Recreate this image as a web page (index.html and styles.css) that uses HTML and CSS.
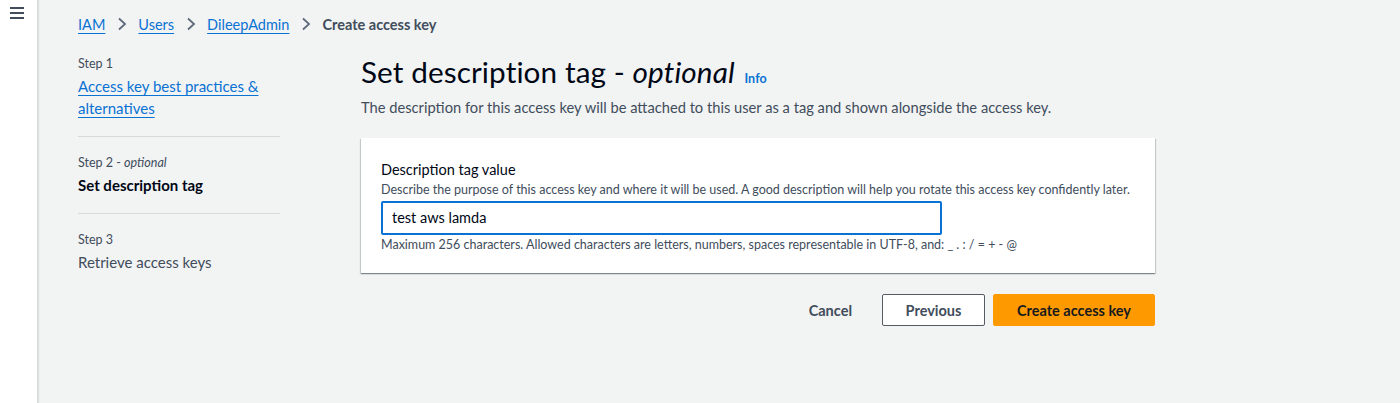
FILE: index.html
```html
<!DOCTYPE html>
<html>
<head>
<meta charset="utf-8">
<link rel="stylesheet" href="styles.css">
</head>
<body>
<div class="app">
  <aside class="rail">
    <svg class="burger" width="16" height="14" viewBox="0 0 16 14"><path d="M1 2h14M1 7h14M1 12h14" stroke="#414d5c" stroke-width="2"/></svg>
  </aside>
  <main class="page">
    <nav class="crumbs">
      <a href="#">IAM</a><span class="sep"><svg width="10" height="14" viewBox="0 0 10 14"><path d="M2 1.5l6 5.5-6 5.5" fill="none" stroke="#5f6b7a" stroke-width="1.8"/></svg></span>
      <a href="#">Users</a><span class="sep"><svg width="10" height="14" viewBox="0 0 10 14"><path d="M2 1.5l6 5.5-6 5.5" fill="none" stroke="#5f6b7a" stroke-width="1.8"/></svg></span>
      <a href="#">DileepAdmin</a><span class="sep"><svg width="10" height="14" viewBox="0 0 10 14"><path d="M2 1.5l6 5.5-6 5.5" fill="none" stroke="#5f6b7a" stroke-width="1.8"/></svg></span>
      <span class="current">Create access key</span>
    </nav>
    <div class="layout">
      <ul class="steps">
        <li class="step">
          <div class="step-num">Step 1</div>
          <a class="step-link" href="#">Access key best practices &amp; alternatives</a>
        </li>
        <li class="step">
          <div class="step-num">Step 2 - <i>optional</i></div>
          <div class="step-active">Set description tag</div>
        </li>
        <li class="step">
          <div class="step-num">Step 3</div>
          <div class="step-off">Retrieve access keys</div>
        </li>
      </ul>
      <section class="content">
        <h1 class="title">Set description tag - <i>optional</i> <a class="info" href="#">Info</a></h1>
        <p class="lead">The description for this access key will be attached to this user as a tag and shown alongside the access key.</p>
        <div class="panel">
          <div class="label">Description tag value</div>
          <div class="hint">Describe the purpose of this access key and where it will be used. A good description will help you rotate this access key confidently later.</div>
          <div class="input">test aws lamda</div>
          <div class="constraint">Maximum 256 characters. Allowed characters are letters, numbers, spaces representable in UTF-8, and: _ . : / = + - @</div>
        </div>
        <div class="actions">
          <button class="btn link">Cancel</button>
          <button class="btn normal">Previous</button>
          <button class="btn primary">Create access key</button>
        </div>
      </section>
    </div>
  </main>
</div>
</body>
</html>
```
FILE: styles.css
```css
* { box-sizing: border-box; }
html, body { margin: 0; padding: 0; }
body {
  font-family: Lato, "Open Sans", sans-serif;
  color: #000716;
  background: #f2f3f3;
  width: 1400px;
  height: 403px;
  overflow: hidden;
}
.app { display: flex; height: 403px; }
.rail {
  width: 38px;
  background: #fff;
  border-right: 1px solid #d5dbdb;
  box-shadow: 1px 0 1px rgba(0,0,0,0.08);
  flex: none;
  padding: 6px 0 0 9px;
}
.burger { display: block; }
.page { flex: 1; padding: 14px 0 0 40px; }
.crumbs {
  display: flex;
  align-items: center;
  font-size: 14.5px;
  height: 22px;
  margin-top: -1px;
  margin-bottom: 1px;
}
.crumbs a { color: #0972d3; text-decoration: underline; text-underline-offset: 3px; }
.crumbs .sep { display: inline-flex; margin: 0 11px 0 12px; }
.crumbs .current { color: #414d5c; font-weight: 700; }
.layout { display: flex; margin-top: 16px; }
.steps {
  list-style: none;
  margin: 0;
  padding: 0;
  width: 202px;
  flex: none;
}
.step { border-bottom: 1px solid #d5dbdb; padding: 4px 0 17px; }
.step + .step { padding-top: 17px; }
.step:last-child { border-bottom: none; }
.step-num { font-size: 12.5px; color: #414d5c; line-height: 18px; margin-bottom: 2px; }
.step-link { font-size: 15px; color: #0972d3; line-height: 22px; text-decoration: underline; text-underline-offset: 3px; }
.step-active { font-size: 15px; font-weight: 700; line-height: 22px; }
.step-off { font-size: 15px; color: #414d5c; line-height: 22px; }
.content { margin-left: 81px; width: 794px; padding-top: 3px; }
.title {
  margin: 0;
  font-size: 29.7px;
  font-weight: 400;
  line-height: 36px;
  letter-spacing: 0.1px;
}
.info { font-size: 12.5px; font-weight: 700; color: #0972d3; text-decoration: none; margin-left: 2px; }
.lead { margin: 0; font-size: 14.7px; color: #414d5c; line-height: 20px; }
.panel {
  margin-top: 21px;
  background: #fff;
  box-shadow: 0 1px 1px 0 rgba(0,28,36,0.3), 1px 1px 1px 0 rgba(0,28,36,0.15), -1px 1px 1px 0 rgba(0,28,36,0.15);
  padding: 22px 20px 20px;
  height: 135px;
}
.label { font-size: 14.5px; line-height: 20px; }
.hint { font-size: 12.5px; color: #414d5c; line-height: 16px; margin-top: 2px; }
.input {
  margin-top: 3px;
  width: 561px;
  height: 34px;
  border: 2px solid #0972d3;
  border-radius: 2px;
  padding: 0 9px;
  font-size: 14.5px;
  line-height: 30px;
}
.constraint { font-size: 12.5px; color: #414d5c; line-height: 16px; margin-top: 2px; }
.actions { display: flex; justify-content: flex-end; align-items: center; margin-top: 21px; gap: 8px; }
.btn {
  font-family: Lato, "Open Sans", sans-serif;
  font-size: 14.5px;
  font-weight: 700;
  height: 32px;
  border-radius: 2px;
  cursor: pointer;
}
.btn.link { background: none; border: none; color: #414d5c; padding: 0 20px; margin-right: 2px; }
.btn.normal { background: #fff; border: 1px solid #545b64; color: #414d5c; width: 103px; }
.btn.primary { background: #ff9900; border: 1px solid #ff9900; color: #16191f; width: 162px; }
```
